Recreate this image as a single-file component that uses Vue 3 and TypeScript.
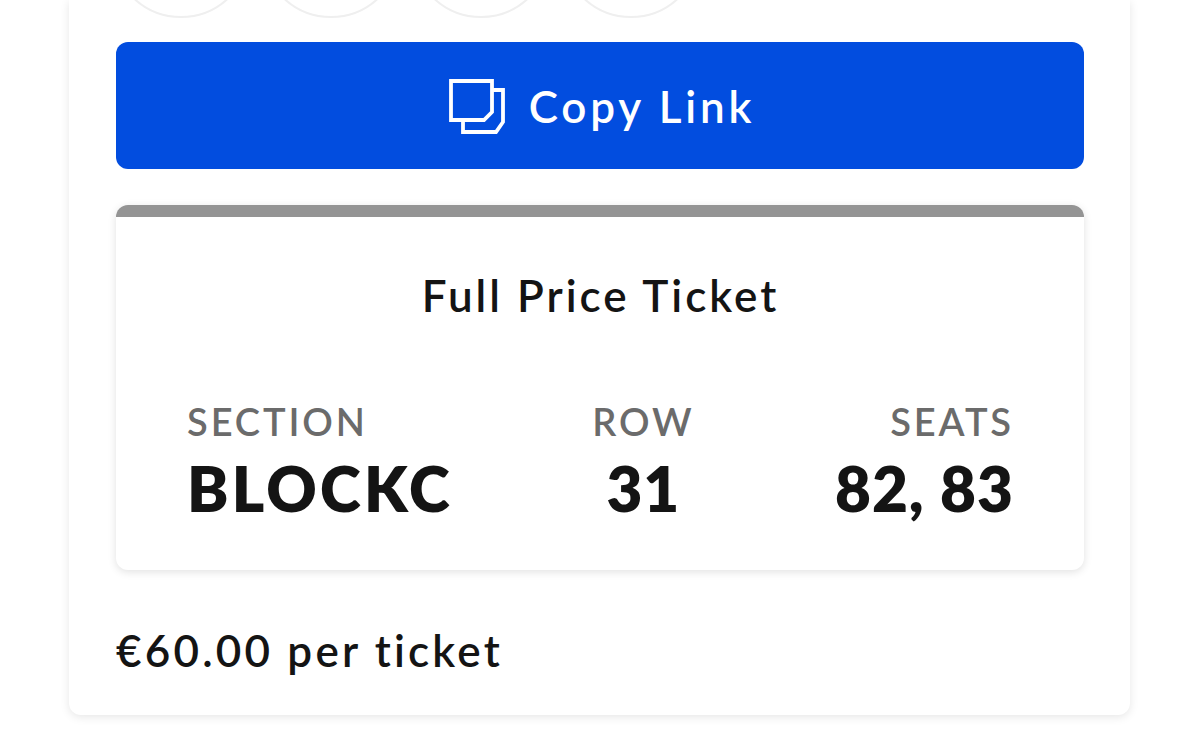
<script setup lang="ts">
const circles: number[] = [1, 2, 3, 4]
</script>

<template>
  <div class="page">
    <section class="card">
      <div class="circles">
        <span v-for="c in circles" :key="c" class="circle"></span>
      </div>
      <button class="copy" type="button">
        <svg class="icon" viewBox="0 0 56 56" width="56" height="56" fill="none" stroke="#fff" stroke-width="3.8">
          <path d="M2 2H43V33L35 41H2Z" />
          <path d="M43 11H54V43L47 53H14V41" />
        </svg>
        <span>Copy Link</span>
      </button>
      <div class="ticket">
        <h2 class="title">Full Price Ticket</h2>
        <div class="cols">
          <div class="col left">
            <div class="label">SECTION</div>
            <div class="value word">BLOCKC</div>
          </div>
          <div class="col mid">
            <div class="label">ROW</div>
            <div class="value">31</div>
          </div>
          <div class="col right">
            <div class="label">SEATS</div>
            <div class="value">82, 83</div>
          </div>
        </div>
      </div>
      <p class="price">€60.00 per ticket</p>
    </section>
  </div>
</template>

<style>
html, body { margin: 0; background: #fff; overflow: hidden; }
</style>

<style scoped>
.page {
  width: 1200px;
  height: 737px;
  overflow: hidden;
  padding: 0 70px 0 69px;
  box-sizing: border-box;
  font-family: Lato, "Liberation Sans", sans-serif;
  color: #141414;
}
.card {
  height: 715px;
  box-sizing: border-box;
  background: #fff;
  border-radius: 0 0 12px 12px;
  box-shadow: 0 2px 10px rgba(0, 0, 0, 0.1);
  padding: 0 46px 0 47px;
  display: flex;
  flex-direction: column;
}
.circles {
  height: 42px;
  display: flex;
  gap: 10px;
  margin-left: -5px;
  align-items: flex-end;
}
.circle {
  flex: none;
  width: 140px;
  height: 140px;
  box-sizing: border-box;
  margin-bottom: 24px;
  border: 2px solid #efefef;
  border-radius: 50%;
}
.copy {
  height: 127px;
  flex: none;
  border: 0;
  border-radius: 12px;
  background: #024ddf;
  color: #fff;
  font: 600 44px Lato, "Liberation Sans", sans-serif;
  letter-spacing: 3.8px;
  display: flex;
  align-items: center;
  justify-content: center;
  gap: 24px;
  padding: 0 0 0 4px;
}
.icon { flex: none; margin-top: 2px; }
.ticket {
  margin-top: 36px;
  height: 365px;
  flex: none;
  box-sizing: border-box;
  border-top: 12px solid #949494;
  border-radius: 12px;
  background: #fff;
  box-shadow: 0 2px 8px rgba(0, 0, 0, 0.12);
  padding: 0 70px 0 71px;
}
.title {
  margin: 50px 0 0;
  font-size: 44px;
  line-height: 56px;
  font-weight: 600;
  letter-spacing: 3px;
  text-align: center;
}
.cols {
  margin-top: 75px;
  display: flex;
  justify-content: space-between;
}
.col { display: flex; flex-direction: column; }
.left { align-items: flex-start; }
.mid { align-items: center; margin-left: -1px; }
.right { align-items: flex-end; }
.label {
  font-size: 38px;
  line-height: 46px;
  color: #6b6b6b;
  font-weight: 600;
  letter-spacing: 2.9px;
}
.value {
  font-size: 62px;
  line-height: 88px;
  font-weight: 800;
  letter-spacing: 1px;
}
.word { letter-spacing: 3.2px; }
.price {
  margin: 50px 0 0;
  font-size: 44px;
  line-height: 60px;
  letter-spacing: 3.2px;
  font-weight: 600;
}
</style>
